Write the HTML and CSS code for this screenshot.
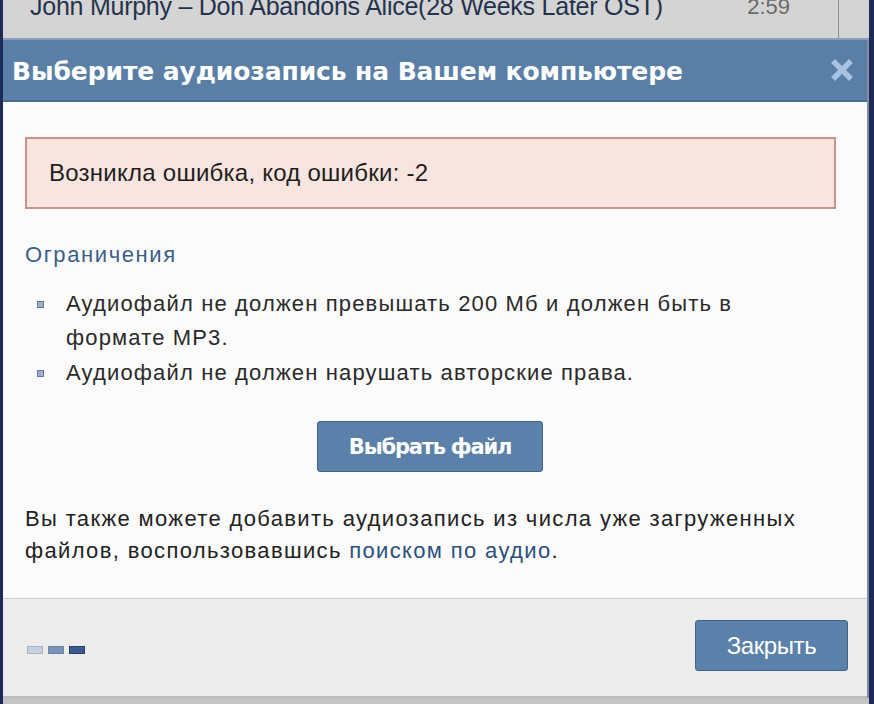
FILE: index.html
```html
<!DOCTYPE html>
<html lang="ru">
<head>
    <meta charset="UTF-8">
    <title>Выберите аудиозапись</title>
    <link rel="stylesheet" href="styles.css">
</head>
<body>
<div class="screen">
    <div class="track">
        <span class="track-name">John Murphy – Don Abandons Alice(28 Weeks Later OST)</span>
        <span class="track-time">2:59</span>
        <span class="track-edge"></span>
    </div>

    <div class="box">
        <div class="box-title">
            <h1>Выберите аудиозапись на Вашем компьютере</h1>
            <span class="box-close">
                <svg width="22" height="22" viewBox="0 0 22 22">
                    <path d="M4 4 L18 18 M18 4 L4 18" stroke="#a9c2e0" stroke-width="5.5" stroke-linecap="square"/>
                </svg>
            </span>
        </div>

        <div class="box-body">
            <div class="error">Возникла ошибка, код ошибки: -2</div>

            <h2 class="limits">Ограничения</h2>
            <ul class="rules">
                <li>Аудиофайл не должен превышать 200 Мб и должен быть в формате MP3.</li>
                <li>Аудиофайл не должен нарушать авторские права.</li>
            </ul>

            <div class="choose">
                <button class="btn btn-choose" type="button">Выбрать файл</button>
            </div>

            <p class="hint">Вы также можете добавить аудиозапись из числа уже загруженных файлов, воспользовавшись <a href="#">поиском по аудио</a>.</p>
        </div>

        <div class="box-footer">
            <div class="progress">
                <span class="dot dot1"></span>
                <span class="dot dot2"></span>
                <span class="dot dot3"></span>
            </div>
            <button class="btn btn-close" type="button">Закрыть</button>
        </div>
    </div>
    <div class="bottom"></div>
</div>
</body>
</html>
```

FILE: styles.css
```css
body {
    margin: 0;
    padding: 0;
    background-color: #1c2a55;
    font-family: 'Liberation Sans', Arial, sans-serif;
    color: #222;
}

.screen {
    width: 866px;
    height: 704px;
    margin-left: 3px;
    background-color: #d2d2d2;
    display: flex;
    flex-direction: column;
    overflow: hidden;
}

/* строка плейлиста сверху */
.track {
    height: 38px;
    display: flex;
    align-items: flex-end;
    position: relative;
    background-color: #d4d4d4;
    border-bottom: 2px solid #8aa0bb;
}

.track-name {
    font-size: 25px;
    color: #24334d;
    margin-left: 27px;
    margin-bottom: 19px;
    line-height: 25px;
    letter-spacing: -0.25px;
}

.track-time {
    font-size: 22px;
    color: #6b6b6b;
    margin-left: auto;
    margin-right: 79px;
    margin-bottom: 20px;
    line-height: 22px;
}

.track-edge {
    position: absolute;
    left: 835px;
    top: 0;
    bottom: 0;
    width: 1px;
    background-color: #8e8e8e;
}

/* окно */
.box {
    flex: 1;
    display: flex;
    flex-direction: column;
    border-right: 2px solid #7f8fa8;
}

.box-title {
    height: 60px;
    background-color: #5a7fa7;
    border-bottom: 2px solid #4a6b90;
    display: flex;
    align-items: center;
    padding: 0 14px 0 9px;
}

.box-title h1 {
    margin: 0;
    font-family: 'DejaVu Sans', Tahoma, sans-serif;
    font-size: 25px;
    font-weight: bold;
    color: #fff;
    letter-spacing: -0.1px;
    flex: 1;
    padding-top: 2px;
}

.box-close {
    width: 22px;
    height: 22px;
}

.box-body {
    background-color: #fbfbfb;
    padding: 35px 31px 0 22px;
    height: 461px;
    border-bottom: 1px solid #cfcfcf;
}

.error {
    background-color: #f9e5df;
    border: 2px solid #c9928a;
    height: 68px;
    display: flex;
    align-items: center;
    padding-left: 22px;
    font-size: 24px;
    letter-spacing: 0.25px;
    color: #1e1e1e;
}

.limits {
    margin: 33px 0 0 0;
    font-size: 22px;
    font-weight: normal;
    color: #3b5e89;
    letter-spacing: 1.6px;
}

.rules {
    list-style: none;
    margin: 19px 0 0 0;
    padding: 0 0 0 41px;
    font-size: 22px;
    line-height: 34px;
    color: #2a2a2a;
    letter-spacing: 1.15px;
}

.rules li {
    position: relative;
    margin-bottom: 1px;
    padding-right: 70px;
}

.rules li::before {
    content: '';
    position: absolute;
    left: -29px;
    top: 14px;
    width: 5px;
    height: 5px;
    background-color: #9fb0c8;
    border: 1px solid #5f7aa0;
}

.choose {
    display: flex;
    justify-content: center;
    margin-top: 31px;
    padding-right: 1px;
}

.btn {
    background-color: #5b80a9;
    border: 1px solid #41648b;
    border-radius: 3px;
    color: #fff;
    font-family: 'DejaVu Sans', Tahoma, sans-serif;
    font-size: 21px;
    cursor: pointer;
    padding: 0;
}

.btn-choose {
    width: 226px;
    height: 51px;
    font-weight: bold;
    letter-spacing: -1.2px;
}

.hint {
    margin: 31px 0 0 0;
    font-size: 22px;
    line-height: 32px;
    color: #222;
    letter-spacing: 1.35px;
}

.hint a {
    color: #2b4f7c;
    text-decoration: none;
}

.box-footer {
    flex: 1;
    background-color: #ececec;
    display: flex;
    align-items: center;
    justify-content: space-between;
    padding: 0 19px 0 24px;
    border-bottom: 2px solid #bdbdbd;
}

.progress {
    display: flex;
    gap: 5px;
    margin-top: 4px;
}

.dot {
    width: 14px;
    height: 6px;
    border: 1px solid #6a82a8;
}

.dot1 {
    background-color: #c5d0df;
    border-color: #a8b6ca;
}

.dot2 {
    background-color: #7a92b8;
}

.dot3 {
    background-color: #3b5b90;
    border-color: #263f6c;
}

.btn-close {
    width: 153px;
    height: 51px;
    margin-bottom: 4px;
    font-family: 'Liberation Sans', Arial, sans-serif;
    font-size: 24px;
    letter-spacing: -0.4px;
}

.bottom {
    height: 6px;
    background-color: #c4c4c4;
}
```
